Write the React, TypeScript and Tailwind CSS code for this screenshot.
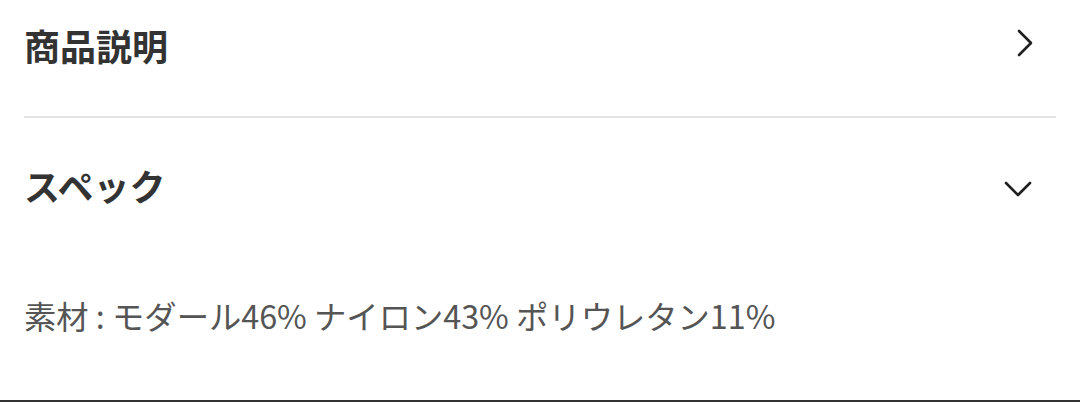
const font = {
  fontFamily: '"Noto Sans CJK JP", "Noto Sans", sans-serif',
};

function ChevronRightIcon() {
  return (
    <svg width="16" height="28" viewBox="0 0 16 28" fill="none" className="text-[#1f1f1f]">
      <polyline points="2,2 14,14 2,26" stroke="currentColor" strokeWidth="2.6" strokeLinecap="round" strokeLinejoin="round" />
    </svg>
  );
}

function ChevronDownIcon() {
  return (
    <svg width="28" height="16" viewBox="0 0 28 16" fill="none" className="text-[#1f1f1f]">
      <polyline points="2,2 14,14 26,2" stroke="currentColor" strokeWidth="2.6" strokeLinecap="round" strokeLinejoin="round" />
    </svg>
  );
}

export default function App() {
  return (
    <div className="flex h-[402px] w-[1080px] flex-col bg-white text-[#333]" style={font}>
      <div className="mx-6 flex-1">
        {/* 商品説明 row */}
        <div className="flex h-[118px] items-start justify-between border-b-2 border-[#e3e3e3] pt-[27px]">
          <h2 className="text-[36px] font-bold leading-none">商品説明</h2>
          <div className="mr-[23px] mt-[2px]">
            <ChevronRightIcon />
          </div>
        </div>

        {/* スペック row */}
        <div className="flex items-center justify-between pt-[49px]">
          <h2 className="text-[36px] font-bold leading-none">スペック</h2>
          <div className="mr-[24px] mt-2">
            <ChevronDownIcon />
          </div>
        </div>

        <p className="mt-[96px] text-[32.3px] leading-none text-[#555]">
          素材 : モダール46% ナイロン43% ポリウレタン11%
        </p>
      </div>
      <div className="h-[2px] bg-[#333]" />
    </div>
  );
}
